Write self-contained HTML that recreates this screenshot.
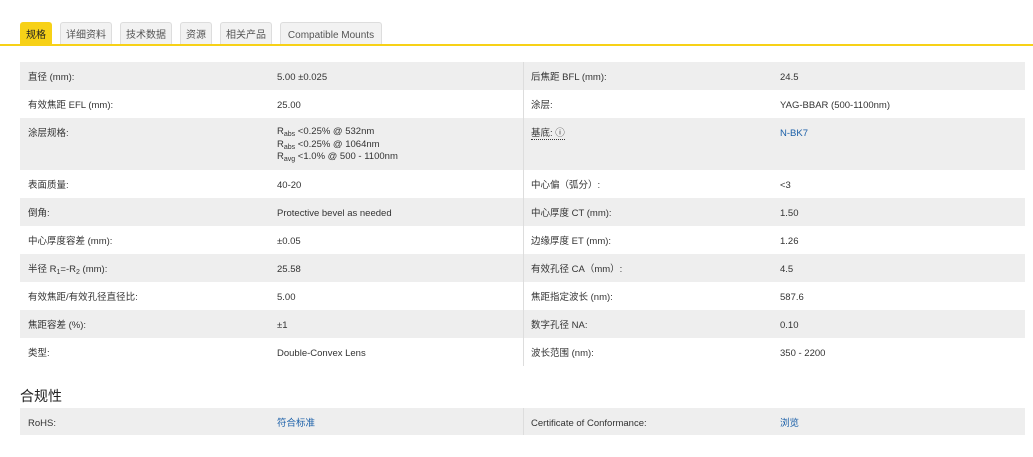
<!DOCTYPE html><html><head><meta charset="utf-8"><style>
body{margin:0;width:1033px;height:457px;background:#fff;font-family:"Liberation Sans","Noto Sans CJK SC",sans-serif;font-size:9.5px;color:#333;position:relative;overflow:hidden}
.tab{position:absolute;top:22px;height:22px;line-height:26px;font-size:10px;color:#555;background:#f2f2f2;border:1px solid #ddd;border-bottom:none;border-radius:3px 3px 0 0;text-align:center;box-sizing:border-box}
.tab.on{background:#f7d117;color:#222;border-color:#f7d117}
.line{position:absolute;left:0;top:44px;width:1033px;height:2px;background:#f7d117}
.r{position:absolute;left:20px;width:1005px}
.g{background:#eeeeee}
.c{position:absolute;top:10px;line-height:11px}
.a{left:8px}.b{left:257px}.d{left:511px}.e{left:760px}
.v{position:absolute;left:523px;top:62px;width:1px;height:304px;background:#ddd}
a{color:#1a5fa8;text-decoration:none}
sub{font-size:7px;vertical-align:-2px;line-height:0}
</style></head><body>
<div class="tab on" style="left:20px;width:32px">规格</div>
<div class="tab" style="left:60px;width:52px">详细资料</div>
<div class="tab" style="left:120px;width:52px">技术数据</div>
<div class="tab" style="left:180px;width:32px">资源</div>
<div class="tab" style="left:220px;width:52px">相关产品</div>
<div class="tab" style="left:280px;width:102px">Compatible Mounts</div>
<div class="line"></div>

<div class="r g" style="top:62px;height:28px"><span class="c a">直径 (mm):</span><span class="c b">5.00 ±0.025</span><span class="c d">后焦距 BFL (mm):</span><span class="c e">24.5</span></div>
<div class="r" style="top:90px;height:28px"><span class="c a">有效焦距 EFL (mm):</span><span class="c b">25.00</span><span class="c d">涂层:</span><span class="c e">YAG-BBAR (500-1100nm)</span></div>
<div class="r g" style="top:118px;height:52px"><span class="c a">涂层规格:</span><span class="c b" style="line-height:12.5px;top:8px">R<sub>abs</sub> &lt;0.25% @ 532nm<br>R<sub>abs</sub> &lt;0.25% @ 1064nm<br>R<sub>avg</sub> &lt;1.0% @ 500 - 1100nm</span><span class="c d" style="border-bottom:1px dotted #333">基底: ⓘ</span><span class="c e"><a>N-BK7</a></span></div>
<div class="r" style="top:170px;height:28px"><span class="c a">表面质量:</span><span class="c b">40-20</span><span class="c d">中心偏（弧分）:</span><span class="c e">&lt;3</span></div>
<div class="r g" style="top:198px;height:28px"><span class="c a">倒角:</span><span class="c b">Protective bevel as needed</span><span class="c d">中心厚度 CT (mm):</span><span class="c e">1.50</span></div>
<div class="r" style="top:226px;height:28px"><span class="c a">中心厚度容差 (mm):</span><span class="c b">±0.05</span><span class="c d">边缘厚度 ET (mm):</span><span class="c e">1.26</span></div>
<div class="r g" style="top:254px;height:28px"><span class="c a">半径 R<sub>1</sub>=-R<sub>2</sub> (mm):</span><span class="c b">25.58</span><span class="c d">有效孔径 CA（mm）:</span><span class="c e">4.5</span></div>
<div class="r" style="top:282px;height:28px"><span class="c a">有效焦距/有效孔径直径比:</span><span class="c b">5.00</span><span class="c d">焦距指定波长 (nm):</span><span class="c e">587.6</span></div>
<div class="r g" style="top:310px;height:28px"><span class="c a">焦距容差 (%):</span><span class="c b">±1</span><span class="c d">数字孔径 NA:</span><span class="c e">0.10</span></div>
<div class="r" style="top:338px;height:28px"><span class="c a">类型:</span><span class="c b">Double-Convex Lens</span><span class="c d">波长范围 (nm):</span><span class="c e">350 - 2200</span></div>
<div class="v"></div>

<div style="position:absolute;left:20px;top:386px;font-size:14px;color:#222">合规性</div>
<div class="r g" style="top:408px;height:27px"><span class="c a">RoHS:</span><span class="c b"><a>符合标准</a></span><span class="c d">Certificate of Conformance:</span><span class="c e"><a>浏览</a></span></div>
<div style="position:absolute;left:523px;top:408px;width:1px;height:27px;background:#ddd"></div>
</body></html>
